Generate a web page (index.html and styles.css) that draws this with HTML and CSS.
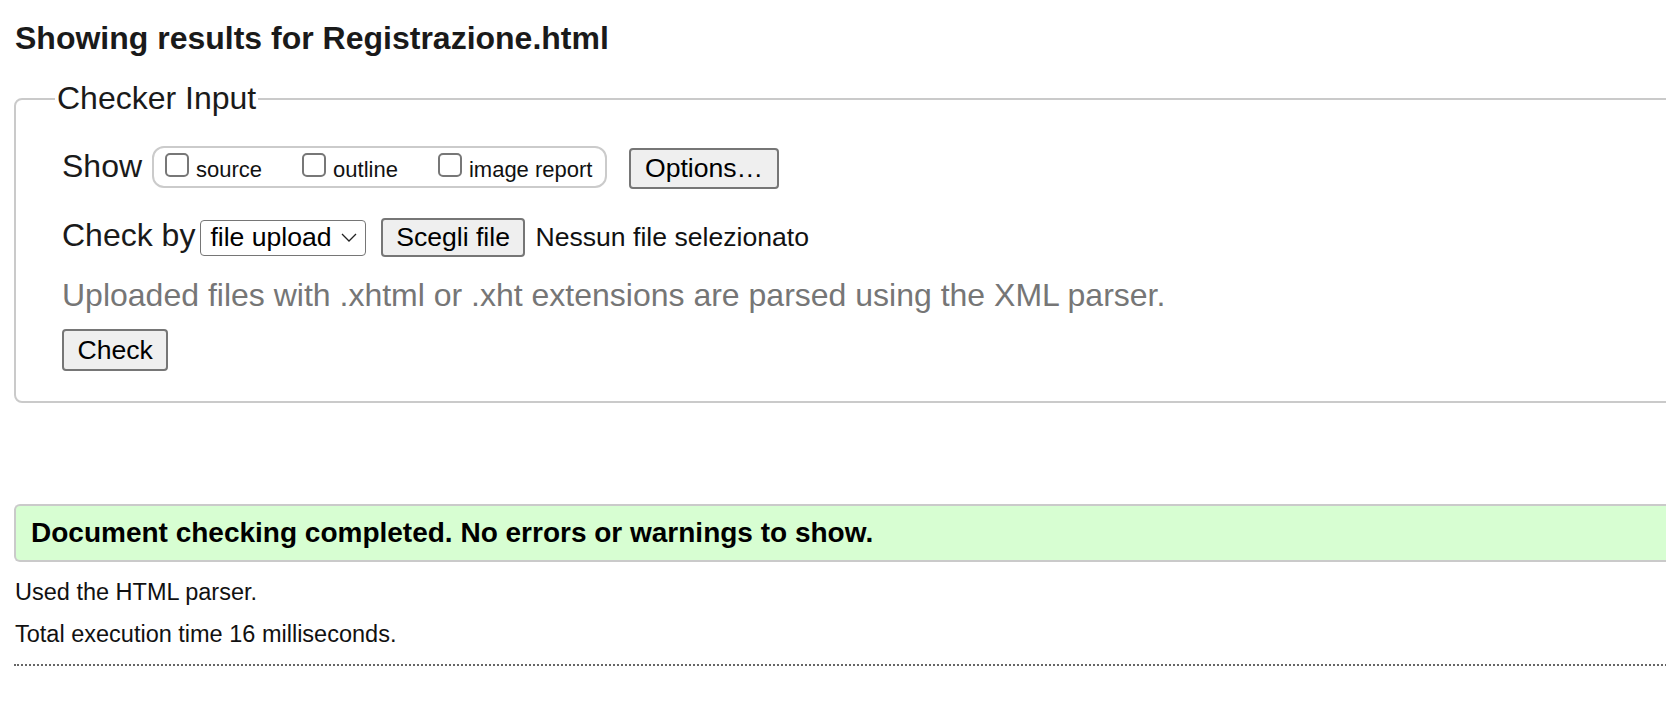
FILE: index.html
```html
<!DOCTYPE html>
<html lang="en">
<head>
<meta charset="utf-8">
<title>Showing results for Registrazione.html</title>
<link rel="stylesheet" href="styles.css">
</head>
<body>
<div class="page">
  <h2 class="title">Showing results for Registrazione.html</h2>
  <form class="checker" onsubmit="return false">
    <fieldset class="input">
      <legend class="legend">Checker Input</legend>
      <div class="row show-row">
        <span class="label">Show</span>
        <span class="opts">
          <label class="opt"><span class="cb"></span>source</label>
          <label class="opt"><span class="cb"></span>outline</label>
          <label class="opt"><span class="cb"></span>image report</label>
        </span>
        <button type="button" class="btn options">Options…</button>
      </div>
      <div class="row by-row">
        <span class="label">Check by</span>
        <span class="select">file upload<svg class="chev" width="16" height="9" viewBox="0 0 16 9"><path d="M1 1 L8 8 L15 1" fill="none" stroke="#222" stroke-width="1.3"/></svg></span>
        <span class="btn file-btn">Scegli file</span>
        <span class="file-name">Nessun file selezionato</span>
      </div>
      <p class="hint">Uploaded files with .xhtml or .xht extensions are parsed using the XML parser.</p>
      <button type="button" class="btn check">Check</button>
    </fieldset>
  </form>
  <div class="success">Document checking completed. No errors or warnings to show.</div>
  <p class="info first">Used the HTML parser.</p>
  <p class="info">Total execution time 16 milliseconds.</p>
  <hr class="sep">
</div>
</body>
</html>
```

FILE: styles.css
```css
html, body {
  margin: 0;
  padding: 0;
  overflow: hidden;
  background: #ffffff;
}

body {
  font-family: "Liberation Sans", Arial, Helvetica, sans-serif;
  color: #111;
}

.page {
  width: 1780px;
  padding-left: 14px;
}

.title {
  margin: 20px 0 0 1px;
  font-size: 32px;
  line-height: 37px;
  font-weight: bold;
  color: #1a1a1a;
}

.checker {
  margin: 23px 0 0 0;
}

.input {
  margin: 0;
  padding: 0 0 30px 0;
  border: 2px solid #cacaca;
  border-radius: 8px;
  min-width: 0;
}

.legend {
  margin-left: 39px;
  padding: 0 2px;
  font-size: 32px;
  line-height: 37px;
  color: #1a1a1a;
}

.row {
  display: flex;
  align-items: baseline;
  padding-left: 46px;
}

.show-row {
  margin-top: 29px;
}

.by-row {
  margin-top: 28px;
}

.label {
  font-size: 32px;
  line-height: 37px;
  color: #1a1a1a;
}

.opts {
  display: inline-flex;
  align-items: baseline;
  margin-left: 10px;
  padding: 5px 13px 4px 11px;
  border: 2px solid #cbcbcb;
  border-radius: 12px;
  font-size: 22px;
  line-height: 25px;
  color: #111;
}

.opt {
  display: inline-flex;
  align-items: baseline;
}

.opt + .opt {
  margin-left: 40px;
}

.cb {
  display: inline-block;
  box-sizing: border-box;
  width: 24px;
  height: 24px;
  margin-right: 7px;
  margin-bottom: 1px;
  border: 2px solid #777;
  border-radius: 5px;
  background: #fff;
}

.btn {
  display: inline-flex;
  align-items: center;
  box-sizing: border-box;
  padding: 0 13.5px;
  border: 2px solid #767676;
  border-radius: 4px;
  background: #efefef;
  font-family: "Liberation Sans", Arial, Helvetica, sans-serif;
  font-size: 26.6px;
  line-height: 31px;
  color: #000;
}

.options {
  height: 41px;
  margin-left: 22px;
}

.select {
  display: inline-flex;
  align-items: center;
  box-sizing: border-box;
  height: 36px;
  margin-left: 5px;
  padding: 0 8px 0 9px;
  border: 1px solid #767676;
  border-radius: 4px;
  background: #fff;
  font-size: 26.6px;
  line-height: 31px;
  color: #000;
}

.chev {
  margin-left: 9px;
}

.file-btn {
  height: 39px;
  margin-left: 15px;
}

.file-name {
  margin-left: 10px;
  font-size: 26.6px;
  line-height: 31px;
  color: #111;
}

.hint {
  margin: 20px 0 0 46px;
  font-size: 32px;
  line-height: 37px;
  color: #767676;
}

.check {
  height: 42px;
  margin: 15px 0 0 46px;
}

.success {
  margin-top: 101px;
  padding: 11px 15px;
  border: 2px solid #cacaca;
  border-right: none;
  border-radius: 6px 0 0 6px;
  background: #d7fed2;
  font-size: 28px;
  line-height: 32px;
  font-weight: bold;
  color: #000;
}

.info {
  margin: 15px 0 0 1px;
  font-size: 23.5px;
  line-height: 27px;
  color: #111;
}

.info.first {
  margin-top: 17px;
}

.sep {
  margin: 16px 0 0 0;
  height: 0;
  border: none;
  border-top: 2px dotted #666;
}
```
